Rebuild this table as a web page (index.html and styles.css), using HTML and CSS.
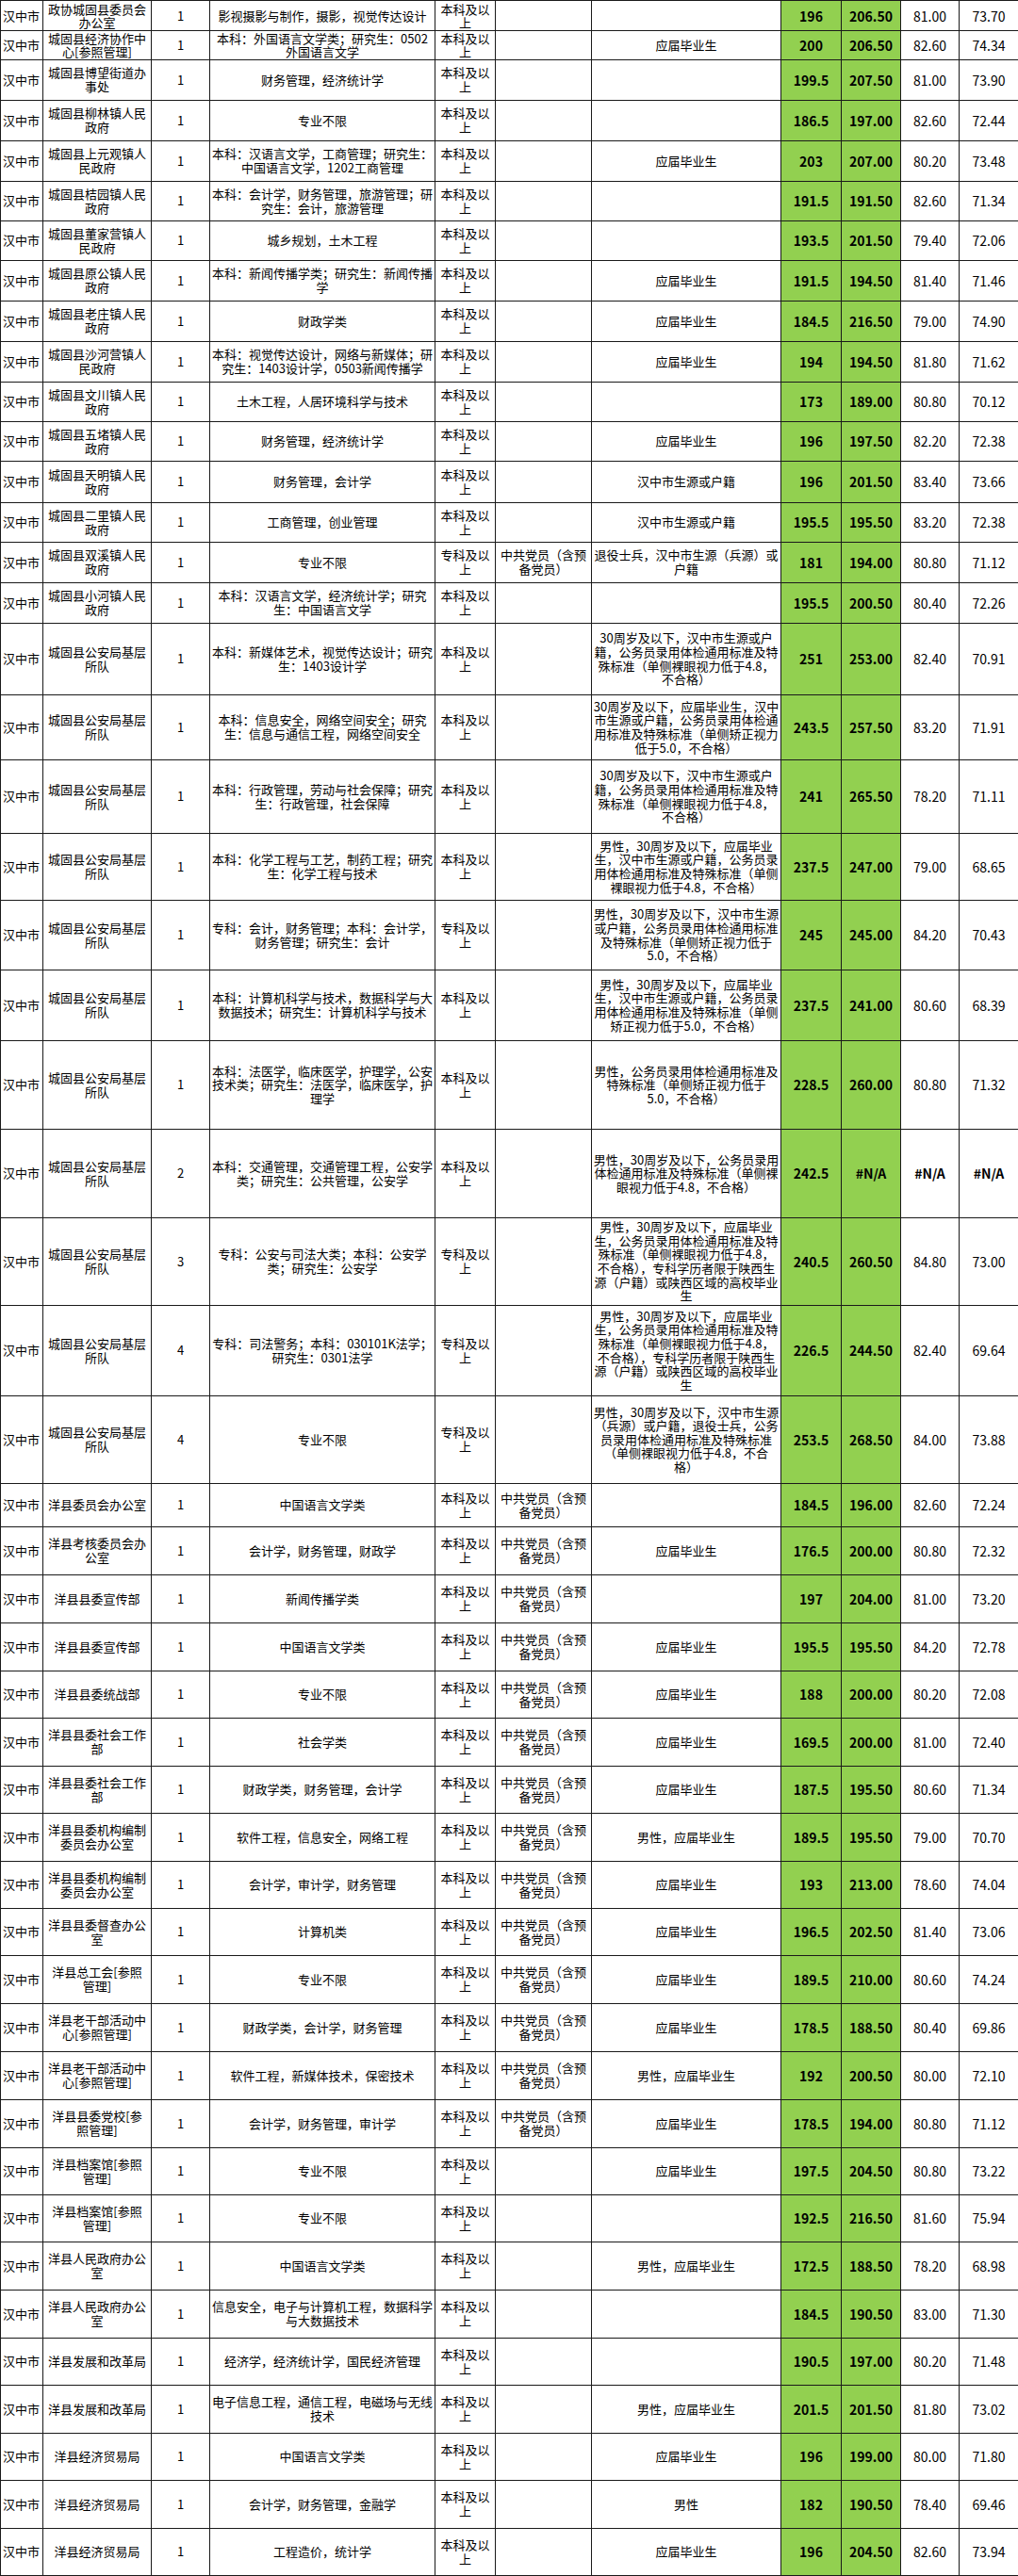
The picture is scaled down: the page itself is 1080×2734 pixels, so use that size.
FILE: index.html
```html
<!DOCTYPE html>
<html lang="zh-CN">
<head>
<meta charset="utf-8">
<title>职位成绩表</title>
<link rel="stylesheet" href="styles.css">
</head>
<body>
<table class="sheet">
<colgroup>
<col class="c-city"><col class="c-dept"><col class="c-num"><col class="c-major"><col class="c-edu"><col class="c-pol"><col class="c-other"><col class="c-s1"><col class="c-s2"><col class="c-s3"><col class="c-s4">
</colgroup>
<tbody>
<tr class="h32 tight"><td class="city">汉中市</td><td>政协城固县委员会<br>办公室</td><td>1</td><td>影视摄影与制作，摄影，视觉传达设计</td><td>本科及以<br>上</td><td></td><td></td><td class="g">196</td><td class="g">206.50</td><td class="n">81.00</td><td class="n">73.70</td></tr>
<tr class="h31 tight"><td class="city">汉中市</td><td>城固县经济协作中<br>心[参照管理]</td><td>1</td><td>本科：外国语言文学类；研究生：0502<br>外国语言文学</td><td>本科及以<br>上</td><td></td><td>应届毕业生</td><td class="g">200</td><td class="g">206.50</td><td class="n">82.60</td><td class="n">74.34</td></tr>
<tr class="h43"><td class="city">汉中市</td><td>城固县博望街道办<br>事处</td><td>1</td><td>财务管理，经济统计学</td><td>本科及以<br>上</td><td></td><td></td><td class="g">199.5</td><td class="g">207.50</td><td class="n">81.00</td><td class="n">73.90</td></tr>
<tr class="h43"><td class="city">汉中市</td><td>城固县柳林镇人民<br>政府</td><td>1</td><td>专业不限</td><td>本科及以<br>上</td><td></td><td></td><td class="g">186.5</td><td class="g">197.00</td><td class="n">82.60</td><td class="n">72.44</td></tr>
<tr class="h43"><td class="city">汉中市</td><td>城固县上元观镇人<br>民政府</td><td>1</td><td>本科：汉语言文学，工商管理；研究生：<br>中国语言文学，1202工商管理</td><td>本科及以<br>上</td><td></td><td>应届毕业生</td><td class="g">203</td><td class="g">207.00</td><td class="n">80.20</td><td class="n">73.48</td></tr>
<tr class="h42"><td class="city">汉中市</td><td>城固县桔园镇人民<br>政府</td><td>1</td><td>本科：会计学，财务管理，旅游管理；研<br>究生：会计，旅游管理</td><td>本科及以<br>上</td><td></td><td></td><td class="g">191.5</td><td class="g">191.50</td><td class="n">82.60</td><td class="n">71.34</td></tr>
<tr class="h42"><td class="city">汉中市</td><td>城固县董家营镇人<br>民政府</td><td>1</td><td>城乡规划，土木工程</td><td>本科及以<br>上</td><td></td><td></td><td class="g">193.5</td><td class="g">201.50</td><td class="n">79.40</td><td class="n">72.06</td></tr>
<tr class="h43"><td class="city">汉中市</td><td>城固县原公镇人民<br>政府</td><td>1</td><td>本科：新闻传播学类；研究生：新闻传播<br>学</td><td>本科及以<br>上</td><td></td><td>应届毕业生</td><td class="g">191.5</td><td class="g">194.50</td><td class="n">81.40</td><td class="n">71.46</td></tr>
<tr class="h43"><td class="city">汉中市</td><td>城固县老庄镇人民<br>政府</td><td>1</td><td>财政学类</td><td>本科及以<br>上</td><td></td><td>应届毕业生</td><td class="g">184.5</td><td class="g">216.50</td><td class="n">79.00</td><td class="n">74.90</td></tr>
<tr class="h43"><td class="city">汉中市</td><td>城固县沙河营镇人<br>民政府</td><td>1</td><td>本科：视觉传达设计，网络与新媒体；研<br>究生：1403设计学，0503新闻传播学</td><td>本科及以<br>上</td><td></td><td>应届毕业生</td><td class="g">194</td><td class="g">194.50</td><td class="n">81.80</td><td class="n">71.62</td></tr>
<tr class="h42"><td class="city">汉中市</td><td>城固县文川镇人民<br>政府</td><td>1</td><td>土木工程，人居环境科学与技术</td><td>本科及以<br>上</td><td></td><td></td><td class="g">173</td><td class="g">189.00</td><td class="n">80.80</td><td class="n">70.12</td></tr>
<tr class="h42"><td class="city">汉中市</td><td>城固县五堵镇人民<br>政府</td><td>1</td><td>财务管理，经济统计学</td><td>本科及以<br>上</td><td></td><td>应届毕业生</td><td class="g">196</td><td class="g">197.50</td><td class="n">82.20</td><td class="n">72.38</td></tr>
<tr class="h44"><td class="city">汉中市</td><td>城固县天明镇人民<br>政府</td><td>1</td><td>财务管理，会计学</td><td>本科及以<br>上</td><td></td><td>汉中市生源或户籍</td><td class="g">196</td><td class="g">201.50</td><td class="n">83.40</td><td class="n">73.66</td></tr>
<tr class="h42"><td class="city">汉中市</td><td>城固县二里镇人民<br>政府</td><td>1</td><td>工商管理，创业管理</td><td>本科及以<br>上</td><td></td><td>汉中市生源或户籍</td><td class="g">195.5</td><td class="g">195.50</td><td class="n">83.20</td><td class="n">72.38</td></tr>
<tr class="h43"><td class="city">汉中市</td><td>城固县双溪镇人民<br>政府</td><td>1</td><td>专业不限</td><td>专科及以<br>上</td><td>中共党员（含预<br>备党员）</td><td>退役士兵，汉中市生源（兵源）或<br>户籍</td><td class="g">181</td><td class="g">194.00</td><td class="n">80.80</td><td class="n">71.12</td></tr>
<tr class="h43"><td class="city">汉中市</td><td>城固县小河镇人民<br>政府</td><td>1</td><td>本科：汉语言文学，经济统计学；研究<br>生：中国语言文学</td><td>本科及以<br>上</td><td></td><td></td><td class="g">195.5</td><td class="g">200.50</td><td class="n">80.40</td><td class="n">72.26</td></tr>
<tr class="h76"><td class="city">汉中市</td><td>城固县公安局基层<br>所队</td><td>1</td><td>本科：新媒体艺术，视觉传达设计；研究<br>生：1403设计学</td><td>本科及以<br>上</td><td></td><td>30周岁及以下，汉中市生源或户<br>籍，公务员录用体检通用标准及特<br>殊标准（单侧裸眼视力低于4.8，<br>不合格）</td><td class="g">251</td><td class="g">253.00</td><td class="n">82.40</td><td class="n">70.91</td></tr>
<tr class="h69"><td class="city">汉中市</td><td>城固县公安局基层<br>所队</td><td>1</td><td>本科：信息安全，网络空间安全；研究<br>生：信息与通信工程，网络空间安全</td><td>本科及以<br>上</td><td></td><td>30周岁及以下，应届毕业生，汉中<br>市生源或户籍，公务员录用体检通<br>用标准及特殊标准（单侧矫正视力<br>低于5.0，不合格）</td><td class="g">243.5</td><td class="g">257.50</td><td class="n">83.20</td><td class="n">71.91</td></tr>
<tr class="h78"><td class="city">汉中市</td><td>城固县公安局基层<br>所队</td><td>1</td><td>本科：行政管理，劳动与社会保障；研究<br>生：行政管理，社会保障</td><td>本科及以<br>上</td><td></td><td>30周岁及以下，汉中市生源或户<br>籍，公务员录用体检通用标准及特<br>殊标准（单侧裸眼视力低于4.8，<br>不合格）</td><td class="g">241</td><td class="g">265.50</td><td class="n">78.20</td><td class="n">71.11</td></tr>
<tr class="h71"><td class="city">汉中市</td><td>城固县公安局基层<br>所队</td><td>1</td><td>本科：化学工程与工艺，制药工程；研究<br>生：化学工程与技术</td><td>本科及以<br>上</td><td></td><td>男性，30周岁及以下，应届毕业<br>生，汉中市生源或户籍，公务员录<br>用体检通用标准及特殊标准（单侧<br>裸眼视力低于4.8，不合格）</td><td class="g">237.5</td><td class="g">247.00</td><td class="n">79.00</td><td class="n">68.65</td></tr>
<tr class="h74"><td class="city">汉中市</td><td>城固县公安局基层<br>所队</td><td>1</td><td>专科：会计，财务管理；本科：会计学，<br>财务管理；研究生：会计</td><td>专科及以<br>上</td><td></td><td>男性，30周岁及以下，汉中市生源<br>或户籍，公务员录用体检通用标准<br>及特殊标准（单侧矫正视力低于<br>5.0，不合格）</td><td class="g">245</td><td class="g">245.00</td><td class="n">84.20</td><td class="n">70.43</td></tr>
<tr class="h75"><td class="city">汉中市</td><td>城固县公安局基层<br>所队</td><td>1</td><td>本科：计算机科学与技术，数据科学与大<br>数据技术；研究生：计算机科学与技术</td><td>本科及以<br>上</td><td></td><td>男性，30周岁及以下，应届毕业<br>生，汉中市生源或户籍，公务员录<br>用体检通用标准及特殊标准（单侧<br>矫正视力低于5.0，不合格）</td><td class="g">237.5</td><td class="g">241.00</td><td class="n">80.60</td><td class="n">68.39</td></tr>
<tr class="h94"><td class="city">汉中市</td><td>城固县公安局基层<br>所队</td><td>1</td><td>本科：法医学，临床医学，护理学，公安<br>技术类；研究生：法医学，临床医学，护<br>理学</td><td>本科及以<br>上</td><td></td><td>男性，公务员录用体检通用标准及<br>特殊标准（单侧矫正视力低于<br>5.0，不合格）</td><td class="g">228.5</td><td class="g">260.00</td><td class="n">80.80</td><td class="n">71.32</td></tr>
<tr class="h94"><td class="city">汉中市</td><td>城固县公安局基层<br>所队</td><td>2</td><td>本科：交通管理，交通管理工程，公安学<br>类；研究生：公共管理，公安学</td><td>本科及以<br>上</td><td></td><td>男性，30周岁及以下，公务员录用<br>体检通用标准及特殊标准（单侧裸<br>眼视力低于4.8，不合格）</td><td class="g">242.5</td><td class="g">#N/A</td><td class="n na">#N/A</td><td class="n na">#N/A</td></tr>
<tr class="h93"><td class="city">汉中市</td><td>城固县公安局基层<br>所队</td><td>3</td><td>专科：公安与司法大类；本科：公安学<br>类；研究生：公安学</td><td>专科及以<br>上</td><td></td><td>男性，30周岁及以下，应届毕业<br>生，公务员录用体检通用标准及特<br>殊标准（单侧裸眼视力低于4.8，<br>不合格），专科学历者限于陕西生<br>源（户籍）或陕西区域的高校毕业<br>生</td><td class="g">240.5</td><td class="g">260.50</td><td class="n">84.80</td><td class="n">73.00</td></tr>
<tr class="h96"><td class="city">汉中市</td><td>城固县公安局基层<br>所队</td><td>4</td><td>专科：司法警务；本科：030101K法学；<br>研究生：0301法学</td><td>专科及以<br>上</td><td></td><td>男性，30周岁及以下，应届毕业<br>生，公务员录用体检通用标准及特<br>殊标准（单侧裸眼视力低于4.8，<br>不合格），专科学历者限于陕西生<br>源（户籍）或陕西区域的高校毕业<br>生</td><td class="g">226.5</td><td class="g">244.50</td><td class="n">82.40</td><td class="n">69.64</td></tr>
<tr class="h93"><td class="city">汉中市</td><td>城固县公安局基层<br>所队</td><td>4</td><td>专业不限</td><td>专科及以<br>上</td><td></td><td>男性，30周岁及以下，汉中市生源<br>（兵源）或户籍，退役士兵，公务<br>员录用体检通用标准及特殊标准<br>（单侧裸眼视力低于4.8，不合<br>格）</td><td class="g">253.5</td><td class="g">268.50</td><td class="n">84.00</td><td class="n">73.88</td></tr>
<tr class="h46"><td class="city">汉中市</td><td>洋县委员会办公室</td><td>1</td><td>中国语言文学类</td><td>本科及以<br>上</td><td>中共党员（含预<br>备党员）</td><td></td><td class="g">184.5</td><td class="g">196.00</td><td class="n">82.60</td><td class="n">72.24</td></tr>
<tr class="h51"><td class="city">汉中市</td><td>洋县考核委员会办<br>公室</td><td>1</td><td>会计学，财务管理，财政学</td><td>本科及以<br>上</td><td>中共党员（含预<br>备党员）</td><td>应届毕业生</td><td class="g">176.5</td><td class="g">200.00</td><td class="n">80.80</td><td class="n">72.32</td></tr>
<tr class="h51"><td class="city">汉中市</td><td>洋县县委宣传部</td><td>1</td><td>新闻传播学类</td><td>本科及以<br>上</td><td>中共党员（含预<br>备党员）</td><td></td><td class="g">197</td><td class="g">204.00</td><td class="n">81.00</td><td class="n">73.20</td></tr>
<tr class="h51"><td class="city">汉中市</td><td>洋县县委宣传部</td><td>1</td><td>中国语言文学类</td><td>本科及以<br>上</td><td>中共党员（含预<br>备党员）</td><td>应届毕业生</td><td class="g">195.5</td><td class="g">195.50</td><td class="n">84.20</td><td class="n">72.78</td></tr>
<tr class="h50"><td class="city">汉中市</td><td>洋县县委统战部</td><td>1</td><td>专业不限</td><td>本科及以<br>上</td><td>中共党员（含预<br>备党员）</td><td>应届毕业生</td><td class="g">188</td><td class="g">200.00</td><td class="n">80.20</td><td class="n">72.08</td></tr>
<tr class="h51"><td class="city">汉中市</td><td>洋县县委社会工作<br>部</td><td>1</td><td>社会学类</td><td>本科及以<br>上</td><td>中共党员（含预<br>备党员）</td><td>应届毕业生</td><td class="g">169.5</td><td class="g">200.00</td><td class="n">81.00</td><td class="n">72.40</td></tr>
<tr class="h50"><td class="city">汉中市</td><td>洋县县委社会工作<br>部</td><td>1</td><td>财政学类，财务管理，会计学</td><td>本科及以<br>上</td><td>中共党员（含预<br>备党员）</td><td>应届毕业生</td><td class="g">187.5</td><td class="g">195.50</td><td class="n">80.60</td><td class="n">71.34</td></tr>
<tr class="h51"><td class="city">汉中市</td><td>洋县县委机构编制<br>委员会办公室</td><td>1</td><td>软件工程，信息安全，网络工程</td><td>本科及以<br>上</td><td>中共党员（含预<br>备党员）</td><td>男性，应届毕业生</td><td class="g">189.5</td><td class="g">195.50</td><td class="n">79.00</td><td class="n">70.70</td></tr>
<tr class="h50"><td class="city">汉中市</td><td>洋县县委机构编制<br>委员会办公室</td><td>1</td><td>会计学，审计学，财务管理</td><td>本科及以<br>上</td><td>中共党员（含预<br>备党员）</td><td>应届毕业生</td><td class="g">193</td><td class="g">213.00</td><td class="n">78.60</td><td class="n">74.04</td></tr>
<tr class="h50"><td class="city">汉中市</td><td>洋县县委督查办公<br>室</td><td>1</td><td>计算机类</td><td>本科及以<br>上</td><td>中共党员（含预<br>备党员）</td><td>应届毕业生</td><td class="g">196.5</td><td class="g">202.50</td><td class="n">81.40</td><td class="n">73.06</td></tr>
<tr class="h51"><td class="city">汉中市</td><td>洋县总工会[参照<br>管理]</td><td>1</td><td>专业不限</td><td>本科及以<br>上</td><td>中共党员（含预<br>备党员）</td><td>应届毕业生</td><td class="g">189.5</td><td class="g">210.00</td><td class="n">80.60</td><td class="n">74.24</td></tr>
<tr class="h51"><td class="city">汉中市</td><td>洋县老干部活动中<br>心[参照管理]</td><td>1</td><td>财政学类，会计学，财务管理</td><td>本科及以<br>上</td><td>中共党员（含预<br>备党员）</td><td>应届毕业生</td><td class="g">178.5</td><td class="g">188.50</td><td class="n">80.40</td><td class="n">69.86</td></tr>
<tr class="h51"><td class="city">汉中市</td><td>洋县老干部活动中<br>心[参照管理]</td><td>1</td><td>软件工程，新媒体技术，保密技术</td><td>本科及以<br>上</td><td>中共党员（含预<br>备党员）</td><td>男性，应届毕业生</td><td class="g">192</td><td class="g">200.50</td><td class="n">80.00</td><td class="n">72.10</td></tr>
<tr class="h51"><td class="city">汉中市</td><td>洋县县委党校[参<br>照管理]</td><td>1</td><td>会计学，财务管理，审计学</td><td>本科及以<br>上</td><td>中共党员（含预<br>备党员）</td><td>应届毕业生</td><td class="g">178.5</td><td class="g">194.00</td><td class="n">80.80</td><td class="n">71.12</td></tr>
<tr class="h50"><td class="city">汉中市</td><td>洋县档案馆[参照<br>管理]</td><td>1</td><td>专业不限</td><td>本科及以<br>上</td><td></td><td>应届毕业生</td><td class="g">197.5</td><td class="g">204.50</td><td class="n">80.80</td><td class="n">73.22</td></tr>
<tr class="h50"><td class="city">汉中市</td><td>洋县档案馆[参照<br>管理]</td><td>1</td><td>专业不限</td><td>本科及以<br>上</td><td></td><td></td><td class="g">192.5</td><td class="g">216.50</td><td class="n">81.60</td><td class="n">75.94</td></tr>
<tr class="h51"><td class="city">汉中市</td><td>洋县人民政府办公<br>室</td><td>1</td><td>中国语言文学类</td><td>本科及以<br>上</td><td></td><td>男性，应届毕业生</td><td class="g">172.5</td><td class="g">188.50</td><td class="n">78.20</td><td class="n">68.98</td></tr>
<tr class="h51"><td class="city">汉中市</td><td>洋县人民政府办公<br>室</td><td>1</td><td>信息安全，电子与计算机工程，数据科学<br>与大数据技术</td><td>本科及以<br>上</td><td></td><td></td><td class="g">184.5</td><td class="g">190.50</td><td class="n">83.00</td><td class="n">71.30</td></tr>
<tr class="h50"><td class="city">汉中市</td><td>洋县发展和改革局</td><td>1</td><td>经济学，经济统计学，国民经济管理</td><td>本科及以<br>上</td><td></td><td></td><td class="g">190.5</td><td class="g">197.00</td><td class="n">80.20</td><td class="n">71.48</td></tr>
<tr class="h51"><td class="city">汉中市</td><td>洋县发展和改革局</td><td>1</td><td>电子信息工程，通信工程，电磁场与无线<br>技术</td><td>本科及以<br>上</td><td></td><td>男性，应届毕业生</td><td class="g">201.5</td><td class="g">201.50</td><td class="n">81.80</td><td class="n">73.02</td></tr>
<tr class="h50"><td class="city">汉中市</td><td>洋县经济贸易局</td><td>1</td><td>中国语言文学类</td><td>本科及以<br>上</td><td></td><td>应届毕业生</td><td class="g">196</td><td class="g">199.00</td><td class="n">80.00</td><td class="n">71.80</td></tr>
<tr class="h51"><td class="city">汉中市</td><td>洋县经济贸易局</td><td>1</td><td>会计学，财务管理，金融学</td><td>本科及以<br>上</td><td></td><td>男性</td><td class="g">182</td><td class="g">190.50</td><td class="n">78.40</td><td class="n">69.46</td></tr>
<tr class="h50"><td class="city">汉中市</td><td>洋县经济贸易局</td><td>1</td><td>工程造价，统计学</td><td>本科及以<br>上</td><td></td><td>应届毕业生</td><td class="g">196</td><td class="g">204.50</td><td class="n">82.60</td><td class="n">73.94</td></tr>
</tbody>
</table>
</body>
</html>
```

FILE: styles.css
```css
html, body {
  margin: 0;
  padding: 0;
  background: #ffffff;
}

body {
  font-family: "Noto Sans CJK SC", "Noto Sans", sans-serif;
  font-size: 13px;
  color: #000000;
}

.sheet {
  width: 1080px;
  border-collapse: collapse;
  table-layout: fixed;
}

.c-city { width: 45px; }
.c-dept { width: 115px; }
.c-num { width: 62px; }
.c-major { width: 239px; }
.c-edu { width: 64px; }
.c-pol { width: 102px; }
.c-other { width: 201px; }
.c-s1 { width: 64px; }
.c-s2 { width: 63px; }
.c-s3 { width: 62px; }
.c-s4 { width: 63px; }

.sheet td {
  border: 1px solid #1a1a1a;
  padding: 0;
  text-align: center;
  vertical-align: middle;
  white-space: nowrap;
  line-height: 14.6px;
}

.sheet tr.tight td {
  line-height: 14px;
}

.sheet td.city {
  text-align: left;
  padding-left: 2px;
}

.sheet td.g {
  background: #92d050;
  font-weight: bold;
  font-size: 14px;
}

.sheet td.n {
  font-size: 14px;
}

.sheet td.na {
  font-weight: bold;
}

.h31 { height: 31px; }
.h32 { height: 32px; }
.h42 { height: 42px; }
.h43 { height: 43px; }
.h44 { height: 44px; }
.h46 { height: 46px; }
.h50 { height: 50px; }
.h51 { height: 51px; }
.h69 { height: 69px; }
.h71 { height: 71px; }
.h74 { height: 74px; }
.h75 { height: 75px; }
.h76 { height: 76px; }
.h78 { height: 78px; }
.h93 { height: 93px; }
.h94 { height: 94px; }
.h96 { height: 96px; }
```
